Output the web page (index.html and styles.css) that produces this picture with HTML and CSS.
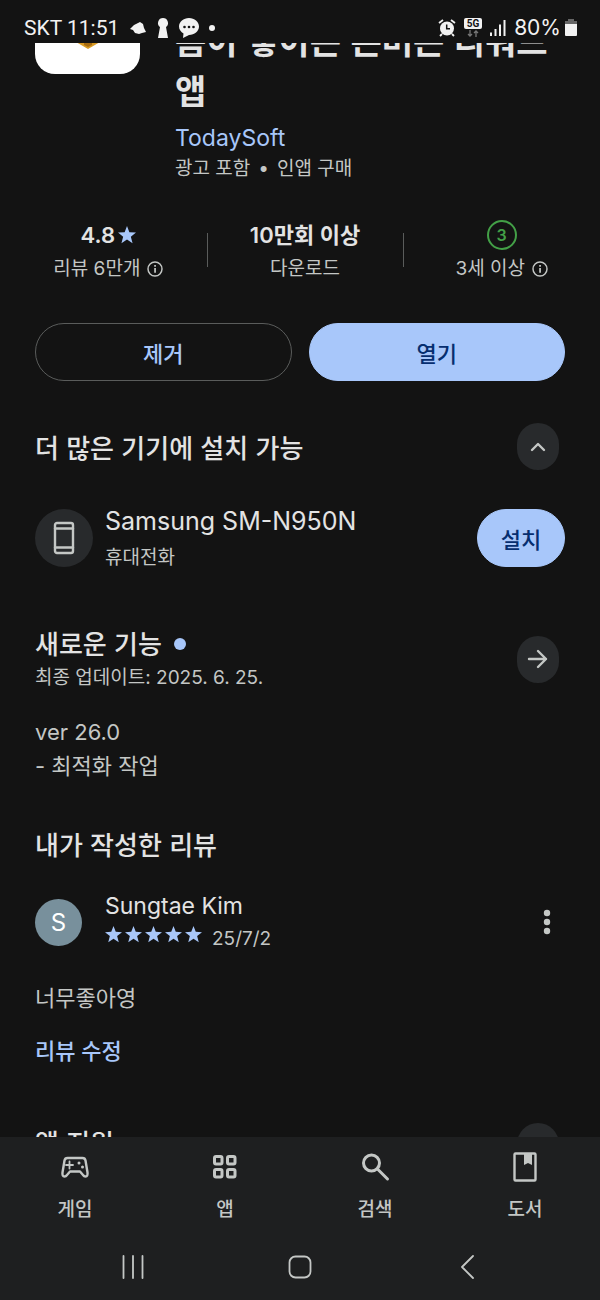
FILE: index.html
```html
<!DOCTYPE html>
<html lang="ko">
<head>
<meta charset="utf-8">
<meta name="viewport" content="width=device-width, initial-scale=1">
<title>앱 정보</title>
<link rel="stylesheet" href="styles.css">
</head>
<body>
<svg class="defs" width="0" height="0" aria-hidden="true">
  <symbol id="star" viewBox="1 1 22 22"><path d="M12 1l2.900 7.600 8.100.4-6.300 5.100 2.100 7.900L12 17.500 5.200 22l2.100-7.900L1 9l8.100-.4z"/></symbol>
  <symbol id="info" viewBox="0 0 24 24"><circle cx="12" cy="12" r="10.500" fill="none" stroke="currentColor" stroke-width="2.200"/><path d="M10.800 10.500h2.600v7h-2.600zM10.800 6h2.600v2.700h-2.600z"/></symbol>
</svg>

<header class="status">
  <div class="status-side">
    <span class="status-text">SKT 11:51</span>
    <svg width="18" height="14" viewBox="0 0 18 14"><path d="M1 8L5 4l6-3 3 2 1 4 2 4-4 1-3 1-4-1-2-3z"/></svg>
    <svg width="12" height="20" viewBox="0 0 12 20"><path d="M6 0a5 5 0 0 1 3 9l2 11H1L3 9A5 5 0 0 1 6 0z"/></svg>
    <svg width="20" height="20" viewBox="0 0 20 20"><path d="M10 0c5.500 0 10 3.800 10 8.500S15.500 17 10 17L4 20l.5-4.500C2 14 0 11.500 0 8.500 0 3.800 4.500 0 10 0z"/><g fill="#131313"><circle cx="5.500" cy="9" r="1.300"/><circle cx="10" cy="9" r="1.300"/><circle cx="14.500" cy="9" r="1.300"/></g></svg>
    <span class="status-dot"></span>
  </div>
  <div class="status-side status-right">
    <svg width="18" height="18" viewBox="0 0 18 18"><circle cx="9" cy="9.500" r="7"/><path d="M1 4l4-3M17 4l-4-3M4 15l-2 2M14 15l2 2" stroke="#f2f2f2" stroke-width="1.800"/><path d="M8.700 5.500v4.300H12" fill="none" stroke="#131313" stroke-width="1.500"/></svg>
    <svg width="18" height="20" viewBox="0 0 18 20"><rect x="0" y="0" width="18" height="11" rx="2"/><text x="9" y="9" text-anchor="middle" class="five-g">5G</text><path d="M6 12v6M4 16l2 2 2-2M12 19v-6M10 15l2-2 2 2" fill="none" stroke="#777" stroke-width="1.300"/></svg>
    <svg width="16" height="18" viewBox="0 0 16 18"><path d="M0 13.500h2V17H0zM4.500 10h2v7h-2zM9 5.500h2V17H9zM13.500 1h2v16h-2z"/></svg>
    <span class="status-battery">80%<svg width="12" height="18" viewBox="0 0 12 18"><path d="M3 0h6v2h3v4H0V2h3z" fill="#666"/><path d="M0 5h12v11q0 1-1 1H1q-1 0-1-1z"/></svg></span>
  </div>
</header>

<main class="content">
  <div class="scroll">
    <section class="app">
      <div class="app-icon"><svg width="24" height="8" viewBox="0 0 24 8"><path d="M0 0h24L12 7z" fill="#d79a24"/><path d="M8 0h8v3l-4 2-4-2z" fill="#a86c10"/></svg></div>
      <div class="app-info">
        <h1 class="app-title">봄이 쌓이는 돈버는 리워드 앱</h1>
        <a class="app-dev" href="#dev">TodaySoft</a>
        <p class="app-note">광고 포함<span class="bullet">•</span>인앱 구매</p>
      </div>
    </section>

    <section class="stats">
      <div class="stat"><div class="stat-value">4.8<svg class="stat-star" width="18" height="18"><use href="#star"/></svg></div><div class="stat-label">리뷰 6만개<svg width="16" height="16"><use href="#info"/></svg></div></div>
      <div class="stat"><div class="stat-value">10만회 이상</div><div class="stat-label">다운로드</div></div>
      <div class="stat"><div class="stat-value"><span class="age">3</span></div><div class="stat-label">3세 이상<svg width="16" height="16"><use href="#info"/></svg></div></div>
    </section>

    <div class="actions">
      <button class="btn btn-outline">제거</button>
      <button class="btn btn-fill">열기</button>
    </div>

    <section class="devices">
      <div class="head">
        <h2 class="heading">더 많은 기기에 설치 가능</h2>
        <button class="round" aria-label="접기"><svg width="16" height="10" viewBox="0 0 16 10"><path d="M2 8l6-6 6 6" class="line medium"/></svg></button>
      </div>
      <div class="device">
        <span class="device-icon"><svg width="22" height="34" viewBox="0 0 22 34"><rect x="2" y="2" width="18" height="30" rx="2" class="line medium"/><path d="M2 7.500h18M2 26.500h18" class="line medium"/></svg></span>
        <div class="device-text"><div class="device-name">Samsung SM-N950N</div><div class="device-kind">휴대전화</div></div>
        <button class="btn btn-fill btn-install">설치</button>
      </div>
    </section>

    <section class="news">
      <div class="head">
        <div>
          <h2 class="heading">새로운 기능<span class="new-dot"></span></h2>
          <p class="updated">최종 업데이트: 2025. 6. 25.</p>
        </div>
        <button class="round" aria-label="자세히"><svg width="22" height="20" viewBox="0 0 22 20"><path d="M2 10h17M11 2l8 8-8 8" class="line medium"/></svg></button>
      </div>
      <p class="notes">ver 26.0<br>- 최적화 작업</p>
    </section>

    <section class="review">
      <h2 class="heading">내가 작성한 리뷰</h2>
      <div class="reviewer">
        <span class="avatar">S</span>
        <div class="reviewer-text">
          <div class="reviewer-name">Sungtae Kim</div>
          <div class="rating">
            <span class="stars"><svg width="17" height="17"><use href="#star"/></svg><svg width="17" height="17"><use href="#star"/></svg><svg width="17" height="17"><use href="#star"/></svg><svg width="17" height="17"><use href="#star"/></svg><svg width="17" height="17"><use href="#star"/></svg></span>
            <span class="date">25/7/2</span>
          </div>
        </div>
        <button class="more" aria-label="더보기"><svg width="8" height="26" viewBox="0 0 8 26"><circle cx="4" cy="4" r="3.200"/><circle cx="4" cy="13" r="3.200"/><circle cx="4" cy="22" r="3.200"/></svg></button>
      </div>
      <p class="review-body">너무좋아영</p>
      <a class="edit" href="#edit">리뷰 수정</a>
    </section>

    <section class="head support">
      <h2 class="heading">앱 지원</h2>
      <button class="round" aria-label="펼치기"></button>
    </section>
  </div>
</main>

<footer class="bottom">
  <nav class="tabs">
    <a class="tab" href="#games"><svg width="32" height="32" viewBox="0 0 32 32"><path d="M8.500 7h15q2.500 0 3 2.500l2 12q.5 4-2 4-1.500 0-2.500-1.500L21 20.500H11L8 24q-1 1.500-2.500 1.500-2.500 0-2-4l2-12Q6 7 8.500 7z" class="line medium"/><path d="M10.500 10.500v7M7 14h7" class="line thin"/><circle cx="20" cy="12" r="1.500"/><circle cx="23.500" cy="16" r="1.500"/></svg>게임</a>
    <a class="tab" href="#apps"><svg width="32" height="32" viewBox="0 0 32 32"><g class="line"><rect x="5.500" y="5.500" width="7.500" height="7.500" rx="1.500"/><rect x="18.500" y="5.500" width="7.500" height="7.500" rx="1.500"/><rect x="5.500" y="18.500" width="7.500" height="7.500" rx="1.500"/><rect x="18.500" y="18.500" width="7.500" height="7.500" rx="1.500"/></g></svg>앱</a>
    <a class="tab" href="#search"><svg width="32" height="32" viewBox="0 0 32 32"><circle cx="12.500" cy="12" r="8" class="line"/><path d="M18.500 18l10 10" class="line"/></svg>검색</a>
    <a class="tab" href="#books"><svg width="32" height="32" viewBox="0 0 32 32"><rect x="5.500" y="2.500" width="21" height="27" rx="1" class="line medium"/><path d="M15 3h8v11l-4-2-4 2z"/></svg>도서</a>
  </nav>
  <div class="system">
    <button class="sys" aria-label="최근 앱"><svg width="24" height="24" viewBox="0 0 24 24"><path d="M2.500 1v22M12 1v22M21.500 1v22" class="line thin"/></svg></button>
    <button class="sys" aria-label="홈"><svg width="24" height="24" viewBox="0 0 24 24"><rect x="1.500" y="1.500" width="21" height="21" rx="6" class="line thin"/></svg></button>
    <button class="sys" aria-label="뒤로"><svg width="24" height="24" viewBox="0 0 24 24"><path d="M18 1L7 12l11 11" class="line thin"/></svg></button>
  </div>
</footer>
</body>
</html>
```
FILE: styles.css
```css
* { box-sizing: border-box; margin: 0; padding: 0; }
body {
  height: 100vh;
  display: flex;
  flex-direction: column;
  overflow: hidden;
  background: #131313;
  color: #e3e3e3;
  font-family: Inter, "Noto Sans CJK KR", sans-serif;
}
a { text-decoration: none; color: inherit; }
button { font: inherit; color: inherit; background: none; border: 0; }
svg { fill: currentColor; flex: none; display: block; }
.defs { position: absolute; }
.line { fill: none; stroke: currentColor; stroke-width: 3; stroke-linecap: round; stroke-linejoin: round; }
.medium { stroke-width: 2.4; }
.thin { stroke-width: 1.8; }

.status {
  flex: none;
  height: 43px;
  padding: 12px 23px 0 24px;
  display: flex;
  justify-content: space-between;
  color: #f2f2f2;
  font: 21px/32px Roboto, sans-serif;
}
.status-side { display: flex; align-items: center; gap: 10px; height: 32px; }
.status-dot { width: 6px; height: 6px; border-radius: 50%; background: #f2f2f2; }
.status-right { gap: 8px; }
.status-battery { display: flex; align-items: center; gap: 4px; font-family: Inter, sans-serif; }
.five-g { font: bold 10px Roboto, sans-serif; fill: #131313; }

.content { flex: 1; min-height: 0; overflow: hidden; }
.scroll { margin-top: -74px; }

.app { display: flex; gap: 35px; padding: 0 35px; }
.app-icon {
  flex: none;
  width: 105px;
  height: 105px;
  border-radius: 20px;
  background: #fff;
  display: flex;
  justify-content: center;
  align-items: flex-end;
  padding-bottom: 24px;
}
.app-info { padding-top: 46px; min-width: 0; }
.app-title { font: 700 34px/50px "Noto Sans CJK KR", sans-serif; }
.app-dev { display: block; padding-top: 4px; font-size: 23px; line-height: 38px; color: #a8c7fa; }
.app-note { font-size: 19px; line-height: 24px; color: #c4c7c5; }
.bullet { margin: 0 8px; }

.stats { display: flex; padding: 37px 0 0 10px; }
.stat { flex: 1; display: flex; flex-direction: column; align-items: center; position: relative; }
.stat + .stat::before { content: ""; position: absolute; left: 0; top: 15px; width: 1px; height: 34px; background: #5a5c5b; }
.stat-value { display: flex; align-items: center; gap: 3px; height: 34px; font-size: 22px; font-weight: 600; line-height: 30px; }
.stat-star, .stars { color: #a8c7fa; }
.stat-label { display: flex; align-items: center; gap: 7px; font-size: 19px; line-height: 34px; color: #c4c7c5; }
.age { width: 30px; height: 30px; border: 2px solid #43a047; border-radius: 50%; color: #43a047; font-size: 16px; font-weight: 600; line-height: 26px; text-align: center; }

.actions { display: flex; gap: 17px; padding: 37px 35px 0; }
.btn { height: 58px; border: 1px solid transparent; border-radius: 29px; font-size: 22px; font-weight: 500; }
.actions .btn { flex: 1; }
.btn-outline { border-color: #5a5c5b; color: #a8c7fa; }
.btn-fill { background: #a8c7fa; border-color: #a8c7fa; color: #062e6f; }
.btn-install { width: 88px; }

.head { display: flex; justify-content: space-between; align-items: center; padding: 0 41px 0 35px; }
.heading { font: 500 26px/38px "Noto Sans CJK KR", sans-serif; }
.round { flex: none; width: 42px; height: 47px; border-radius: 21px; background: #282a2c; color: #c4c7c5; display: flex; align-items: center; justify-content: center; }

.devices { padding-top: 42px; }
.device { display: flex; align-items: center; gap: 12px; padding: 32px 35px 0; }
.device-icon { flex: none; width: 58px; height: 58px; border-radius: 50%; background: #282a2c; color: #c4c7c5; display: flex; align-items: center; justify-content: center; }
.device-text { flex: 1; }
.device-name { font-size: 25px; line-height: 38px; }
.device-kind { padding-top: 2px; font-size: 19px; line-height: 32px; color: #c4c7c5; }

.news { padding-top: 50px; }
.new-dot { display: inline-block; width: 12px; height: 12px; margin-left: 12px; border-radius: 50%; background: #a8c7fa; vertical-align: 4px; }
.updated { font-size: 19px; line-height: 32px; color: #c4c7c5; }
.notes { padding: 21px 35px 0; font-size: 22px; line-height: 34px; color: #c4c7c5; }

.review { padding-top: 42px; }
.review .heading { padding: 0 35px; }
.reviewer { display: flex; align-items: center; padding: 26px 49px 0 35px; }
.avatar { flex: none; width: 47px; height: 47px; margin-right: 23px; border-radius: 50%; background: #78909c; color: #fff; font-size: 24px; line-height: 47px; text-align: center; }
.reviewer-text { flex: 1; }
.reviewer-name { font-size: 23px; line-height: 34px; }
.rating { display: flex; align-items: flex-start; gap: 10px; }
.stars { display: flex; gap: 3px; padding-top: 3px; }
.date { font-size: 19px; line-height: 32px; color: #c4c7c5; }
.more { color: #c4c7c5; }
.review-body { padding: 26px 35px 0; font-size: 22px; line-height: 34px; color: #c4c7c5; }
.edit { display: block; padding: 18px 35px 0; font-size: 22px; font-weight: 500; line-height: 36px; color: #a8c7fa; }
.support { align-items: flex-start; padding-top: 54px; }

.bottom { flex: none; background: #1e1f20; color: #c4c7c5; }
.tabs { display: flex; }
.tab { flex: 1; display: flex; flex-direction: column; align-items: center; gap: 12px; padding-top: 14px; font-size: 19px; font-weight: 500; line-height: 30px; }
.system { display: flex; padding: 30px 49px 21px; }
.sys { flex: 1; display: flex; justify-content: center; }
```
